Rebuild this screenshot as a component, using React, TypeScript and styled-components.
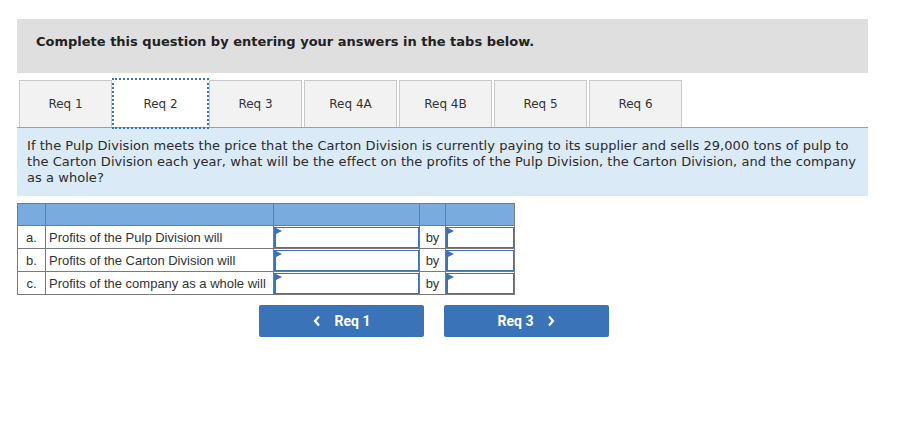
import React from "react";
import styled, { createGlobalStyle } from "styled-components";

const Global = createGlobalStyle`
  html, body { margin: 0; padding: 0; background: #fff; }
  * { box-sizing: border-box; }
`;

const Page = styled.div`
  width: 920px;
  padding: 19px 52px 0 17px;
  font-family: "DejaVu Sans", Verdana, sans-serif;
  color: #222;
`;

const Header = styled.div`
  height: 54px;
  background: #dfdfdf;
  padding: 15px 0 0 19px;
  font-weight: bold;
  font-size: 13px;
  line-height: 16px;
  color: #222;
`;

const TabBar = styled.div`
  margin-top: 7px;
  display: flex;
  gap: 2px;
  padding-left: 2px;
  border-bottom: 1px solid #a0a0a0;
`;

const Tab = styled.div<{ $active?: boolean }>`
  width: 93px;
  height: 47px;
  display: flex;
  align-items: center;
  justify-content: center;
  font-size: 12px;
  color: #333;
  background: ${(p) => (p.$active ? "#fff" : "#f2f2f2")};
  border: 1px solid ${(p) => (p.$active ? "#fff" : "#c8c8c8")};
  border-bottom: none;
  outline: ${(p) => (p.$active ? "2px dotted #3b73b9" : "none")};
  outline-offset: 0px;
`;

const Question = styled.div`
  background: #dbeaf7;
  padding: 10px 4px 10px 10px;
  font-size: 13px;
  line-height: 16px;
  letter-spacing: 0.05px;
  color: #2a2a2a;
`;

const Table = styled.table`
  margin-top: 7px;
  border-collapse: collapse;
  font-family: "Liberation Sans", Arial, sans-serif;
  font-size: 13px;
  color: #333;
  border: 1px solid #7a7a7a;
`;

const HeadCell = styled.th<{ $w: number }>`
  background: #7aabdf;
  height: 22px;
  width: ${(p) => p.$w}px;
  border: 1px solid #7a7a7a;
  padding: 0;
`;

const Cell = styled.td<{ $center?: boolean }>`
  height: 23px;
  border: 1px solid #7a7a7a;
  padding: 0 3px;
  text-align: ${(p) => (p.$center ? "center" : "left")};
  white-space: nowrap;
`;

const InputCell = styled.td`
  height: 23px;
  border: 1px solid #7a7a7a;
  padding: 0;
`;

const InputBox = styled.div`
  position: relative;
  height: 21px;
  border: 1px solid #3c72b6;
  border-left-width: 2px;
  background: #fff;
  &::before {
    content: "";
    position: absolute;
    left: 0;
    top: 0;
    border-top: 3px solid transparent;
    border-bottom: 3px solid transparent;
    border-left: 6px solid #3c72b6;
  }
`;

const NavRow = styled.div`
  display: flex;
  gap: 20px;
  margin-top: 10px;
  padding-left: 242px;
`;

const NavButton = styled.button`
  width: 165px;
  height: 32px;
  background: #3b73b9;
  border: none;
  border-radius: 2px;
  color: #fff;
  font-family: Roboto, "Liberation Sans", Arial, sans-serif;
  font-weight: bold;
  font-size: 14px;
  display: flex;
  align-items: center;
  justify-content: center;
  gap: 14px;
  padding: 0;
`;

const Chevron = ({ dir }: { dir: "left" | "right" }) => (
  <svg width="8" height="12" viewBox="0 0 8 12">
    <path
      d={dir === "left" ? "M6 1.5 L2 6 L6 10.5" : "M2 1.5 L6 6 L2 10.5"}
      fill="none"
      stroke="#fff"
      strokeWidth="2.2"
    />
  </svg>
);

const tabs = ["Req 1", "Req 2", "Req 3", "Req 4A", "Req 4B", "Req 5", "Req 6"];
const rows = [
  ["a.", "Profits of the Pulp Division will"],
  ["b.", "Profits of the Carton Division will"],
  ["c.", "Profits of the company as a whole will"],
];

export default function App() {
  return (
    <>
      <Global />
      <Page>
        <Header>Complete this question by entering your answers in the tabs below.</Header>
        <TabBar>
          {tabs.map((t) => (
            <Tab key={t} $active={t === "Req 2"}>
              {t}
            </Tab>
          ))}
        </TabBar>
        <Question>
          If the Pulp Division meets the price that the Carton Division is currently paying to its supplier and sells
          29,000 tons of pulp to the Carton Division each year, what will be the effect on the profits of the Pulp
          Division, the Carton Division, and the company as a whole?
        </Question>
        <Table>
          <thead>
            <tr>
              <HeadCell $w={28} />
              <HeadCell $w={228} />
              <HeadCell $w={146} />
              <HeadCell $w={26} />
              <HeadCell $w={69} />
            </tr>
          </thead>
          <tbody>
            {rows.map(([l, t]) => (
              <tr key={l}>
                <Cell $center>{l}</Cell>
                <Cell>{t}</Cell>
                <InputCell>
                  <InputBox />
                </InputCell>
                <Cell $center>by</Cell>
                <InputCell>
                  <InputBox />
                </InputCell>
              </tr>
            ))}
          </tbody>
        </Table>
        <NavRow>
          <NavButton>
            <Chevron dir="left" />
            Req 1
          </NavButton>
          <NavButton>
            Req 3
            <Chevron dir="right" />
          </NavButton>
        </NavRow>
      </Page>
    </>
  );
}
